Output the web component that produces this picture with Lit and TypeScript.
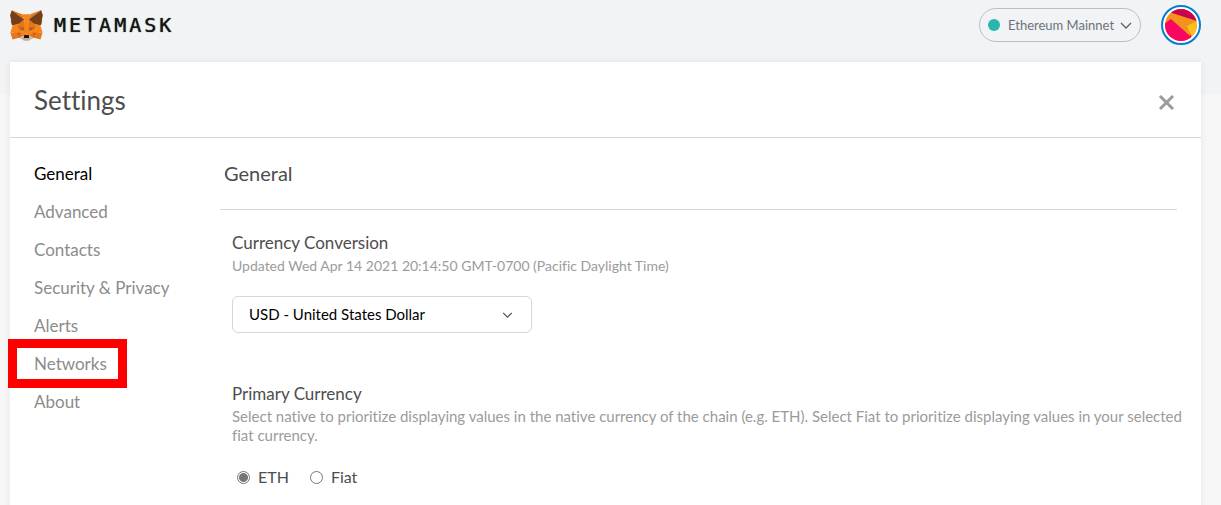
import { LitElement, html, css, svg } from "lit";
import { customElement, state } from "lit/decorators.js";
import { classMap } from "lit/directives/class-map.js";

const chevron = svg`<path d="M1 1l5 5 5-5" fill="none" stroke="currentColor" stroke-width="1.3"/>`;

@customElement("mm-header")
class MmHeader extends LitElement {
  static styles = css`
    :host {
      display: block;
    }
    .bar {
      display: flex;
      align-items: center;
      justify-content: space-between;
      height: 50px;
      padding: 0 20px 0 10px;
    }
    .brand,
    .actions {
      display: flex;
      align-items: center;
    }
    .brand {
      gap: 11px;
      color: #161616;
      text-decoration: none;
    }
    .fox {
      width: 33px;
      height: 31px;
    }
    .wordmark {
      font: 20px/24px "DejaVu Sans Mono", monospace;
      letter-spacing: 3px;
      text-shadow: 0 0 1px #161616;
    }
    .actions {
      gap: 20px;
    }
    .network {
      display: flex;
      align-items: center;
      box-sizing: border-box;
      width: 162px;
      height: 34px;
      padding: 0 8px;
      border: 1px solid #bbc0c5;
      border-radius: 17px;
      background: none;
      color: #6a737d;
      font: inherit;
      font-size: 13px;
    }
    .dot {
      width: 12px;
      height: 12px;
      border-radius: 50%;
      background: #29b6af;
    }
    .name {
      flex: 1;
      padding-left: 8px;
      text-align: left;
      white-space: nowrap;
    }
    .arrow {
      width: 12px;
      height: 7px;
      color: #5a6068;
    }
    .account {
      width: 40px;
      height: 40px;
      padding: 0;
      border: 0;
      background: none;
    }
    .avatar {
      display: block;
      width: 40px;
      height: 40px;
    }
  `;

  render() {
    return html`
      <header class="bar">
        <a class="brand" href="#">
          <svg class="fox" viewBox="31 34 257 239" aria-hidden="true">
            <path fill="#f6851b" d="M60 150 100 130h119l40 20-8 90-70 20h-42l-70-20z" />
            <path fill="#e2761b" stroke="#e2761b" stroke-width="3" d="M274.1 35.5 174.6 109.4 193 65.8z" />
            <path fill="#e4761b" d="m44.4 35.5 98.7 74.6-17.5-44.3zm193.9 171.3-26.5 40.6 56.7 15.6 16.3-55.3zm-204.4.9L50.1 263l56.7-15.6-26.5-40.6z" />
            <path fill="#e4761b" d="m103.6 138.2-15.8 23.9 56.3 2.5-2-60.5zm111.3 0-39-34.8-1.3 61.2 56.2-2.5zM106.8 247.4l33.8-16.5-29.2-22.8zm71.1-16.5 33.9 16.5-4.7-39.3z" />
            <path fill="#d7c1b3" d="m211.8 247.4-33.9-16.5 2.7 22.1-.3 9.3zm-105 0 31.5 14.9-.2-9.3 2.5-22.1z" />
            <path fill="#51545c" d="m138.8 193.5-28.2-8.3 19.9-9.1zm40.9 0 8.3-17.4 20 9.1z" />
            <path fill="#cd6116" d="m106.8 247.4 4.8-40.6-31.3.9zM207 206.8l4.8 40.6 26.5-39.7zm23.8-44.7-56.2 2.5 5.2 28.9 8.3-17.4 20 9.1zm-120.2 23.1 20-9.1 8.2 17.4 5.3-28.9-56.3-2.5z" />
            <path fill="#e4751f" d="m87.8 162.1 23.6 46-.8-22.9zm120.3 23.1-1 22.9 23.7-46zm-64-20.6-5.3 28.9 6.6 34.1 1.5-44.9zm30.5 0-2.7 18 1.2 45 6.7-34.1z" />
            <path fill="#f6851b" d="m179.8 193.5-6.7 34.1 4.8 3.3 29.2-22.8 1-22.9zm-69.2-8.3.8 22.9 29.2 22.8 4.8-3.3-6.6-34.1z" />
            <path fill="#c0ad9e" d="m180.3 262.3.3-9.3-2.5-2.2h-37.7l-2.3 2.2.2 9.3-31.5-14.9 11 9 22.3 15.5h38.3l22.4-15.5 11-9z" />
            <path fill="#161616" d="m177.9 230.9-4.8-3.3h-27.7l-4.8 3.3-2.5 22.1 2.3-2.2h37.7l2.5 2.2z" />
            <path fill="#763d16" d="m278.3 114.2 8.5-40.8-12.7-37.9-96.2 71.4 37 31.3 52.3 15.3 11.6-13.5-5-3.6 8-7.3-6.2-4.8 8-6.1zM31.8 73.4l8.5 40.8-5.4 4 8 6.1-6.1 4.8 8 7.3-5 3.6 11.5 13.5 52.3-15.3 37-31.3-96.2-71.4z" />
            <path fill="#f6851b" d="m267.2 153.5-52.3-15.3 15.9 23.9-23.7 46 31.2-.4h46.5zm-163.6-15.3-52.3 15.3-17.4 54.2h46.4l31.1.4-23.6-46zm71 26.4 3.3-57.7 15.2-41.1h-67.5l15 41.1 3.5 57.7 1.2 18.2.1 44.8h27.7l.2-44.8z" />
          </svg>
          <span class="wordmark">METAMASK</span>
        </a>
        <div class="actions">
          <button class="network" type="button">
            <span class="dot"></span>
            <span class="name">Ethereum Mainnet</span>
            <svg class="arrow" viewBox="0 0 12 7" aria-hidden="true">${chevron}</svg>
          </button>
          <button class="account" type="button" aria-label="My accounts">
            <svg class="avatar" viewBox="0 0 40 40" aria-hidden="true">
              <defs><clipPath id="disc"><circle cx="20" cy="20" r="16" /></clipPath></defs>
              <circle cx="20" cy="20" r="19" fill="#fff" stroke="#037dd6" stroke-width="2" />
              <g clip-path="url(#disc)">
                <path fill="#f3931c" d="M0 0h40v40H0z" />
                <path fill="#c8034f" d="M8 7 36 16V0H8z" />
                <path fill="#fac022" d="M26 21 40 14v18L30 30z" />
                <path fill="#fb0563" d="M0 21 10 14 29 31v-3l4 12H0z" />
              </g>
            </svg>
          </button>
        </div>
      </header>
    `;
  }
}

@customElement("mm-general-tab")
class MmGeneralTab extends LitElement {
  static styles = css`
    :host {
      display: block;
      flex: 1;
      min-width: 0;
    }
    .subheader {
      height: 71px;
      margin: 0 24px 0 0;
      border-bottom: 1px solid #d8d8d8;
      padding-left: 4px;
      color: #4d4d4d;
      font-size: 20px;
      font-weight: 400;
      line-height: 70px;
    }
    .body {
      padding: 21px 16px 0 12px;
    }
    .row {
      margin: 0 0 49px;
      padding: 0;
      border: 0;
    }
    .title {
      display: block;
      padding: 0;
      color: #4d4d4d;
      font-size: 17px;
      line-height: 24px;
    }
    .description {
      margin: 1px 0 21px;
      color: #9b9b9b;
      font-size: 15px;
      line-height: 19px;
    }
    .stamp {
      font-size: 14px;
    }
    .dropdown {
      position: relative;
      width: 300px;
      max-width: 100%;
    }
    .select {
      appearance: none;
      display: block;
      box-sizing: border-box;
      width: 100%;
      height: 37px;
      padding: 0 40px 2px 16px;
      border: 1px solid #d2d8dd;
      border-radius: 6px;
      background: #fff;
      color: #000;
      font: inherit;
      font-size: 15px;
    }
    .arrow {
      position: absolute;
      top: 16px;
      right: 19px;
      width: 11px;
      height: 6px;
      color: #4d4d4d;
      pointer-events: none;
    }
    .options {
      display: flex;
      gap: 21px;
      padding-left: 5px;
    }
    .option {
      display: flex;
      align-items: center;
      gap: 8px;
      color: #4d4d4d;
      font-size: 16px;
      line-height: 22px;
    }
    .radio {
      box-sizing: border-box;
      width: 13px;
      height: 13px;
      margin: 0;
      appearance: none;
      border: 1px solid #767676;
      border-radius: 50%;
      background: #fff;
    }
    .radio:checked {
      background: radial-gradient(circle, #767676 4px, #fff 5px);
    }
  `;

  render() {
    return html`
      <h2 class="subheader">General</h2>
      <div class="body">
        <section class="row">
          <label class="title" for="currency">Currency Conversion</label>
          <p class="description stamp">Updated Wed Apr 14 2021 20:14:50 GMT-0700 (Pacific Daylight Time)</p>
          <div class="dropdown">
            <select class="select" id="currency">
              <option>USD - United States Dollar</option>
            </select>
            <svg class="arrow" viewBox="0 0 12 7" aria-hidden="true">${chevron}</svg>
          </div>
        </section>
        <fieldset class="row">
          <legend class="title">Primary Currency</legend>
          <p class="description">
            Select native to prioritize displaying values in the native currency of the chain (e.g. ETH). Select Fiat to
            prioritize displaying values in your selected fiat currency.
          </p>
          <div class="options">
            <label class="option"><input class="radio" type="radio" name="primary" checked />ETH</label>
            <label class="option"><input class="radio" type="radio" name="primary" />Fiat</label>
          </div>
        </fieldset>
      </div>
    `;
  }
}

@customElement("app-root")
class AppRoot extends LitElement {
  static styles = css`
    :host {
      display: block;
      box-sizing: border-box;
      height: 100vh;
      overflow: hidden;
      background: linear-gradient(#f2f3f4 94px, #f7f7f7 94px);
      font-family: Lato, sans-serif;
      font-variant-ligatures: none;
    }
    .card {
      min-height: 100vh;
      margin: 12px 20px 0 10px;
      background: #fff;
      box-shadow: 0 0 7px rgba(0, 0, 0, 0.08);
    }
    .head {
      display: flex;
      align-items: center;
      justify-content: space-between;
      height: 75px;
      padding: 0 26px 0 24px;
      border-bottom: 1px solid #d2d8dd;
    }
    .heading {
      margin: 0;
      color: #4d4d4d;
      font-size: 26px;
      font-weight: 400;
      line-height: 32px;
    }
    .close {
      width: 17px;
      height: 17px;
      margin-top: 5px;
      padding: 0;
      border: 0;
      background: none;
      color: #9b9b9b;
    }
    .cross {
      display: block;
    }
    .content {
      display: flex;
    }
    .nav {
      width: 210px;
      padding-top: 17px;
    }
    .tab {
      display: block;
      position: relative;
      padding-left: 24px;
      color: #8c8c8c;
      font-size: 17px;
      line-height: 38px;
      text-decoration: none;
    }
    .active {
      color: #000;
    }
    .marked::after {
      content: "";
      position: absolute;
      top: -6px;
      bottom: -5px;
      left: -2px;
      box-sizing: border-box;
      width: 119px;
      border: 9px solid #f00;
    }
  `;

  @state() private tab = "General";

  private tabs = ["General", "Advanced", "Contacts", "Security & Privacy", "Alerts", "Networks", "About"];

  render() {
    return html`
      <mm-header></mm-header>
      <main class="card">
        <div class="head">
          <h1 class="heading">Settings</h1>
          <button class="close" type="button" aria-label="Close">
            <svg class="cross" width="17" height="17" viewBox="0 0 17 17" aria-hidden="true">
              <path d="M2 2l13 13M15 2L2 15" stroke="currentColor" stroke-width="3" />
            </svg>
          </button>
        </div>
        <div class="content">
          <nav class="nav">
            ${this.tabs.map(
              (name) => html`<a
                class=${classMap({ tab: true, active: name === this.tab, marked: name === "Networks" })}
                href="#"
                >${name}</a
              >`
            )}
          </nav>
          <mm-general-tab></mm-general-tab>
        </div>
      </main>
    `;
  }
}
